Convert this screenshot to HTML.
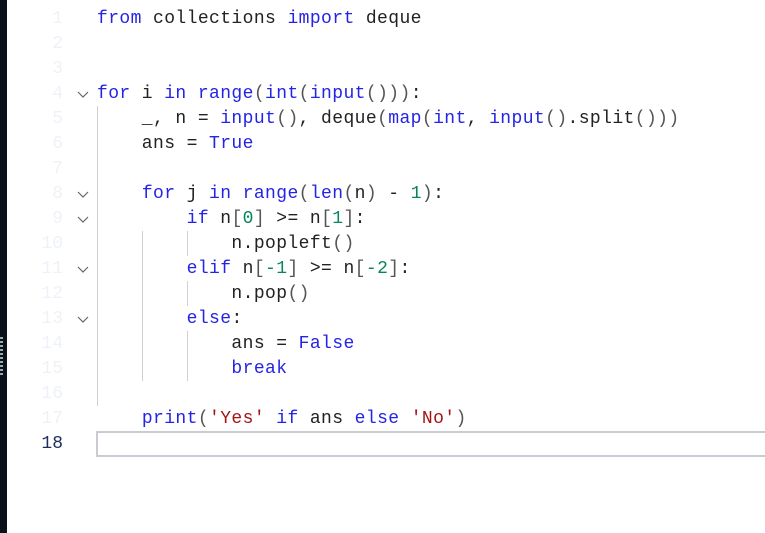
<!DOCTYPE html>
<html><head><style>
body{margin:0;width:765px;height:533px;background:#fff;position:relative;overflow:hidden;font-family:"Liberation Mono",monospace;}
.strip{position:absolute;left:0;top:0;width:7px;height:533px;background:#0b111a;}
.dots{position:absolute;left:0;top:337px;width:3px;height:40px;background:repeating-linear-gradient(#9aa 0 2px,#0b111a 2px 4px);}
.ln{position:absolute;left:20px;width:43px;text-align:right;font-size:18px;color:#eef2f8;height:25px;line-height:25px;}
.code{position:absolute;left:97px;font-size:18px;letter-spacing:0.4px;white-space:pre;color:#222;height:25px;line-height:25px;}
.k{color:#2424e6}.n{color:#098658}.s{color:#a31515}.p{color:#555}
.g{position:absolute;width:1px;background:#d0d0d0;}
.chev{position:absolute;left:77px;width:12px;height:8px;}
.cur{position:absolute;left:96px;top:431px;width:680px;height:22px;border:2px solid #c8ccd2;}
</style></head><body>
<div class="strip"></div><div class="dots"></div>
<div class="cur"></div>
<div class="g" style="left:97px;top:106px;height:300px"></div>
<div class="g" style="left:142px;top:231px;height:150px"></div>
<div class="g" style="left:187px;top:231px;height:25px"></div>
<div class="g" style="left:187px;top:281px;height:25px"></div>
<div class="g" style="left:187px;top:331px;height:50px"></div>
<svg class="chev" style="top:91px" viewBox="0 0 12 8"><path d="M1 1L6 6L11 1" fill="none" stroke="#666" stroke-width="1.2"/></svg>
<svg class="chev" style="top:191px" viewBox="0 0 12 8"><path d="M1 1L6 6L11 1" fill="none" stroke="#666" stroke-width="1.2"/></svg>
<svg class="chev" style="top:216px" viewBox="0 0 12 8"><path d="M1 1L6 6L11 1" fill="none" stroke="#666" stroke-width="1.2"/></svg>
<svg class="chev" style="top:266px" viewBox="0 0 12 8"><path d="M1 1L6 6L11 1" fill="none" stroke="#666" stroke-width="1.2"/></svg>
<svg class="chev" style="top:316px" viewBox="0 0 12 8"><path d="M1 1L6 6L11 1" fill="none" stroke="#666" stroke-width="1.2"/></svg>
<div class="ln" style="top:7px">1</div><div class="ln" style="top:32px">2</div><div class="ln" style="top:57px">3</div><div class="ln" style="top:82px">4</div><div class="ln" style="top:107px">5</div><div class="ln" style="top:132px">6</div><div class="ln" style="top:157px">7</div><div class="ln" style="top:182px">8</div><div class="ln" style="top:207px">9</div><div class="ln" style="top:232px">10</div><div class="ln" style="top:257px">11</div><div class="ln" style="top:282px">12</div><div class="ln" style="top:307px">13</div><div class="ln" style="top:332px">14</div><div class="ln" style="top:357px">15</div><div class="ln" style="top:382px">16</div><div class="ln" style="top:407px">17</div><div class="ln" style="top:432px;color:#1e2d5a">18</div>
<div class="code" style="top:7px"><span class="k">from</span> collections <span class="k">import</span> deque</div>
<div class="code" style="top:82px"><span class="k">for</span> i <span class="k">in</span> <span class="k">range</span><span class="p">(</span><span class="k">int</span><span class="p">(</span><span class="k">input</span><span class="p">()))</span>:</div>
<div class="code" style="top:107px">    _, n = <span class="k">input</span><span class="p">()</span>, deque<span class="p">(</span><span class="k">map</span><span class="p">(</span><span class="k">int</span>, <span class="k">input</span><span class="p">()</span>.split<span class="p">()))</span></div>
<div class="code" style="top:132px">    ans = <span class="k">True</span></div>
<div class="code" style="top:182px">    <span class="k">for</span> j <span class="k">in</span> <span class="k">range</span><span class="p">(</span><span class="k">len</span><span class="p">(</span>n<span class="p">)</span> - <span class="n">1</span><span class="p">)</span>:</div>
<div class="code" style="top:207px">        <span class="k">if</span> n<span class="p">[</span><span class="n">0</span><span class="p">]</span> &gt;= n<span class="p">[</span><span class="n">1</span><span class="p">]</span>:</div>
<div class="code" style="top:232px">            n.popleft<span class="p">()</span></div>
<div class="code" style="top:257px">        <span class="k">elif</span> n<span class="p">[</span><span class="n">-1</span><span class="p">]</span> &gt;= n<span class="p">[</span><span class="n">-2</span><span class="p">]</span>:</div>
<div class="code" style="top:282px">            n.pop<span class="p">()</span></div>
<div class="code" style="top:307px">        <span class="k">else</span>:</div>
<div class="code" style="top:332px">            ans = <span class="k">False</span></div>
<div class="code" style="top:357px">            <span class="k">break</span></div>
<div class="code" style="top:407px">    <span class="k">print</span><span class="p">(</span><span class="s">'Yes'</span> <span class="k">if</span> ans <span class="k">else</span> <span class="s">'No'</span><span class="p">)</span></div>
</body></html>
